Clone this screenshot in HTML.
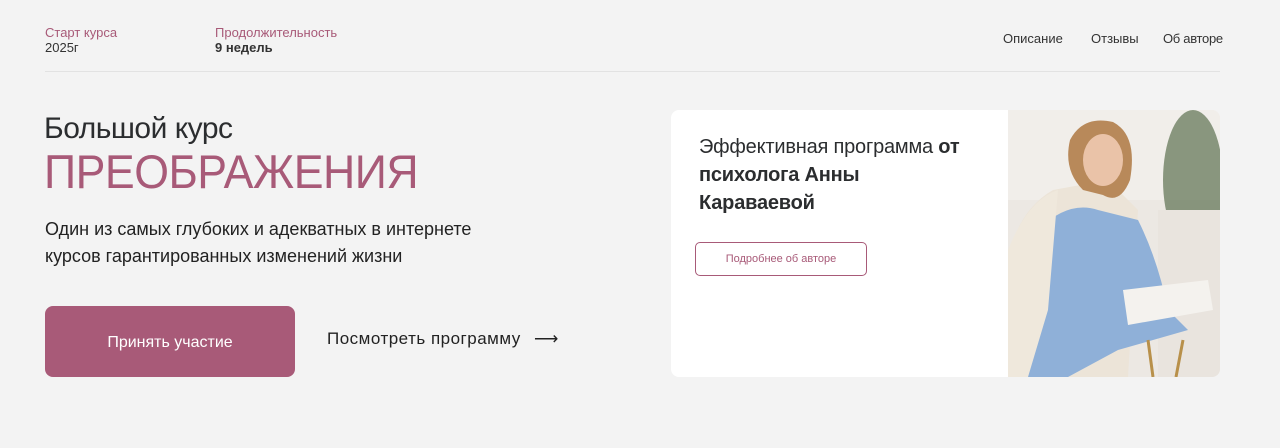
<!DOCTYPE html>
<html><head><meta charset="utf-8"><style>
*{margin:0;padding:0;box-sizing:border-box}
body{width:1280px;height:448px;background:#f3f3f3;font-family:"Liberation Sans",sans-serif;position:relative;overflow:hidden;color:#2b2d2f}
.a{position:absolute;white-space:nowrap}
.lbl{color:#a85a78;font-size:13px}
.val{font-size:13px;font-weight:bold;color:#333}
.nav{font-size:13px;color:#333;top:31px}
</style></head><body>
<div class="a lbl" style="left:45px;top:25px">Старт курса</div>
<div class="a val" style="left:45px;top:40px;font-weight:normal">2025г</div>
<div class="a lbl" style="left:215px;top:25px">Продолжительность</div>
<div class="a val" style="left:215px;top:40px">9 недель</div>
<div class="a nav" style="left:1003px">Описание</div>
<div class="a nav" style="left:1091px">Отзывы</div>
<div class="a nav" style="left:1163px;letter-spacing:-0.3px">Об авторе</div>
<div class="a" style="left:45px;top:71px;width:1175px;height:1px;background:#e2e2e2"></div>

<div class="a" style="left:44px;top:112px;font-size:30px;color:#2b2d2f;letter-spacing:-0.5px">Большой курс</div>
<div class="a" style="left:44px;top:144px;font-size:47px;color:#a85a78;letter-spacing:-0.5px;transform:scaleX(0.95);transform-origin:left">ПРЕОБРАЖЕНИЯ</div>
<div class="a" style="left:45px;top:216px;font-size:18px;line-height:27px;color:#222">Один из самых глубоких и адекватных в интернете<br>курсов гарантированных изменений жизни</div>
<div class="a" style="left:45px;top:306px;width:250px;height:71px;background:#a85a78;border-radius:8px;color:#fff;font-size:16px;text-align:center;line-height:73px">Принять участие</div>
<div class="a" style="left:327px;top:329px;font-size:17px;color:#222;letter-spacing:0.5px">Посмотреть программу <span style="margin-left:8px">⟶</span></div>

<div class="a" style="left:671px;top:110px;width:549px;height:267px;background:#fff;border-radius:8px;overflow:hidden">
 <div class="a" style="left:28px;top:23px;font-size:20px;line-height:28px;color:#2b2d2f;letter-spacing:-0.2px">Эффективная программа <b>от</b><br><b>психолога Анны</b><br><b>Караваевой</b></div>
 <div class="a" style="left:24px;top:132px;width:172px;height:34px;border:1px solid #a85a78;border-radius:5px;font-size:11px;color:#a85a78;text-align:center;line-height:32px">Подробнее об авторе</div>
 <svg class="a" style="left:337px;top:0" width="212" height="267" viewBox="0 0 212 267">
  <rect width="212" height="267" fill="#ece8e3"/>
  <rect x="0" y="0" width="212" height="90" fill="#f1eeea"/>
  <ellipse cx="185" cy="70" rx="30" ry="70" fill="#5c7050" opacity="0.7"/>
  <rect x="150" y="100" width="62" height="167" fill="#e9e4de"/>
  <path d="M0 150 Q10 100 45 80 L100 70 L130 100 L120 267 L0 267Z" fill="#ece4d8"/>
  <path d="M30 120 Q60 90 90 100 L130 110 Q150 150 160 200 L180 220 L110 240 L60 267 L10 267 Q15 200 30 120Z" fill="#8fb0d8"/>
  <path d="M0 140 Q20 90 50 80 L40 200 L20 267 L0 267Z" fill="#efe8dc"/>
  <path d="M115 180 L200 170 L205 200 L120 215Z" fill="#f4f2ee"/>
  <path d="M62 30 Q75 5 105 12 Q130 25 122 70 Q112 95 95 85 L75 80 Q55 60 62 30Z" fill="#b8895a"/>
  <ellipse cx="95" cy="50" rx="20" ry="26" fill="#eac3a8"/>
  <path d="M140 230 L145 267 M175 230 L168 267" stroke="#b8904a" stroke-width="3"/>
 </svg>
</div>
</body></html>
